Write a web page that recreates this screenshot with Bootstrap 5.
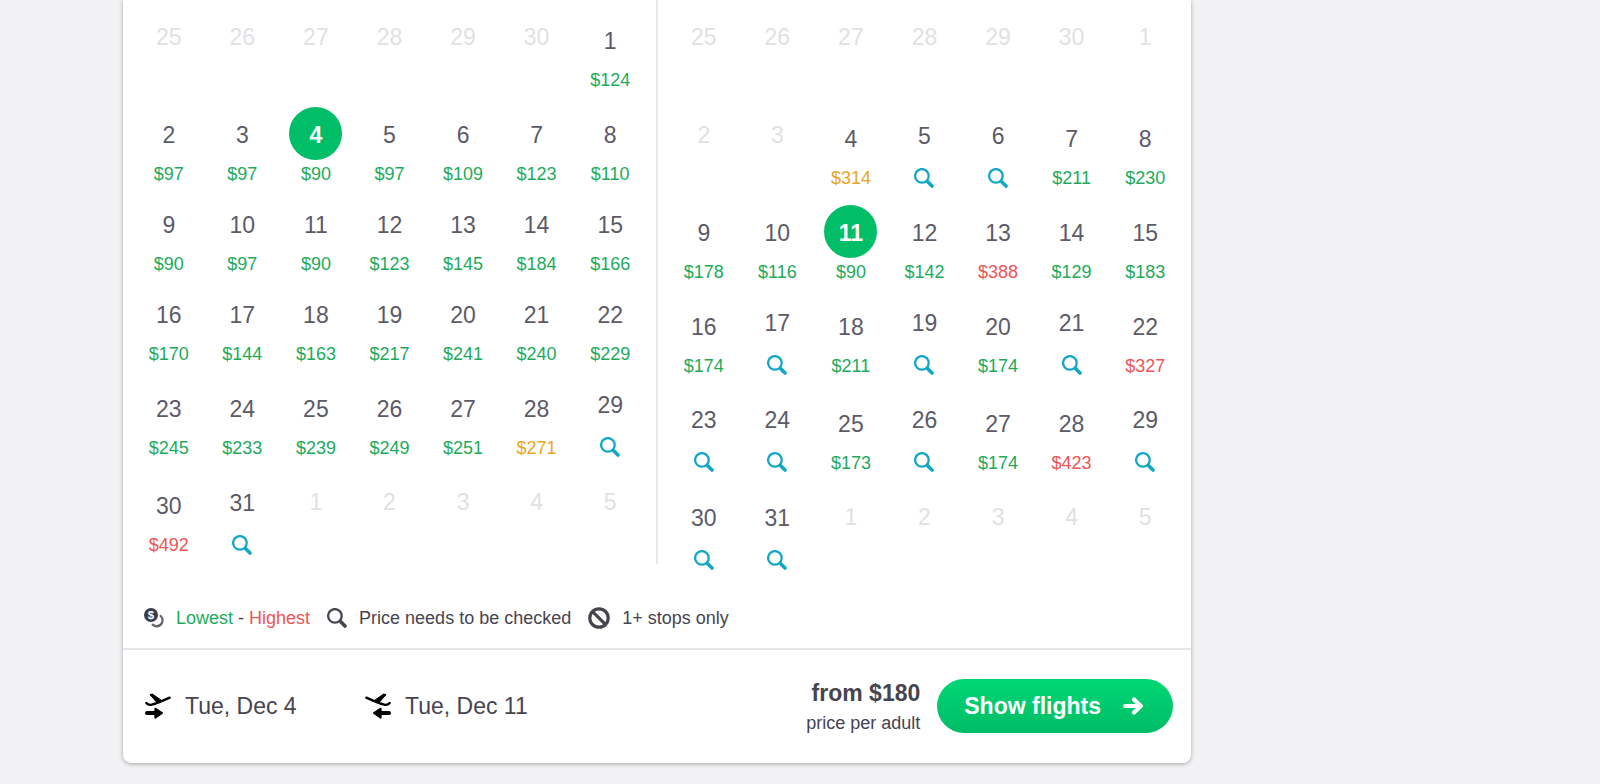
<!DOCTYPE html>
<html lang="en">
<head>
<meta charset="utf-8">
<meta name="viewport" content="width=device-width, initial-scale=1">
<title>Choose flight dates</title>
<link href="https://cdn.jsdelivr.net/npm/bootstrap@5.3.0/dist/css/bootstrap.min.css" rel="stylesheet">
<style>
  :root { --ink: #46444f; --low: #1dab5b; --mid: #e8a61f; --high: #ee5555; --check: #12a8c4; --brand: #00be67; }
  body { background: #f2f2f4; color: var(--ink); font-family: "Liberation Sans", Arial, sans-serif; font-size: 18px; line-height: 24px; }
  .picker { max-width: 1068px; margin: 0 24px 21px 123px; border-radius: 0 0 8px 8px; box-shadow: 0 1px 4px rgba(0, 0, 0, .32); }
  .month-pane { flex: 1 1 0; min-width: 0; padding: 4px 9px 0; }
  .month-rule { width: 2px; margin-bottom: 18px; background: #e9e9ea; }
  .month-grid { width: 100%; table-layout: fixed; border-collapse: collapse; }
  .month-grid td { padding: 5px 0; vertical-align: middle; text-align: center; }
  .date-btn { display: block; width: 100%; padding: 0; border: 0; background: none; color: #5c5a67; }
  .date-num { display: block; width: 53px; height: 53px; margin: 0 auto; font-size: 23px; line-height: 56px; border-radius: 50%; }
  .date-price { display: block; height: 27px; line-height: 28px; }
  .date-check { display: flex; height: 34px; align-items: center; justify-content: center; color: var(--check); }
  .date-blank { height: 35px; }
  .date-off { color: #e1e1e4; }
  .picked .date-num { background: var(--brand); color: #fff; font-weight: 700; }
  .low { color: var(--low); }
  .mid { color: var(--mid); }
  .high { color: var(--high); }
  .legend-row { padding: 24px 21px 18px; gap: 17px; border-bottom: 2px solid #e4e5e7; }
  .legend-item { display: flex; align-items: center; gap: 12px; }
  .trip-row { padding: 24px 18px 25px 22px; }
  .trip-date { display: flex; align-items: center; gap: 14px; font-size: 23px; width: 220px; color: var(--ink); text-decoration: none; }
  .trip-date svg { color: #000; }
  .fare { line-height: 30px; padding-top: 4px; margin-right: 17px; }
  .fare strong { font-size: 23px; }
  .show-btn { height: 54px; padding: 0 30px 0 27px; gap: 22px; border: 0; border-radius: 27px; color: #fff; font-size: 23px; font-weight: 700; background: linear-gradient(#00d775, #00bc66); }
  svg { flex: none; display: block; }
</style>
</head>
<body>
<svg width="0" height="0" class="position-absolute" aria-hidden="true">
  <symbol id="i-search" viewBox="0 0 20 20">
    <circle cx="7.9" cy="7.9" r="6.8" fill="none" stroke="currentColor" stroke-width="2.3"/>
    <path d="M12.5 12.5L14 14" stroke="currentColor" stroke-width="2.8"/>
    <path d="M14.2 14.2L18 18" stroke="currentColor" stroke-width="3.6" stroke-linecap="round"/>
  </symbol>
  <symbol id="i-plane" viewBox="0 0 78 78">
    <path d="M4 30Q10 37 20 35Q30 34 74 14" fill="none" stroke="currentColor" stroke-width="7" stroke-linecap="round"/>
    <path d="M15 5L22 3L49 22L36 29Z" fill="currentColor" stroke="currentColor" stroke-width="3" stroke-linejoin="round"/>
    <path d="M6 60H34" stroke="currentColor" stroke-width="12" stroke-linecap="round"/>
    <path d="M31 47L51 60L31 74Z" fill="currentColor" stroke="currentColor" stroke-width="6" stroke-linejoin="round"/>
  </symbol>
</svg>

<main class="picker bg-white">
  <section class="d-flex" aria-label="Fare calendar">
    <div class="month-pane"><table class="month-grid" id="departMonth" aria-label="Departure month"></table></div>
    <div class="month-rule"></div>
    <div class="month-pane"><table class="month-grid" id="returnMonth" aria-label="Return month"></table></div>
  </section>

  <div class="legend-row d-flex flex-wrap">
    <div class="legend-item">
      <svg width="20" height="20" viewBox="0 0 60 60" aria-hidden="true">
        <path d="M50 24A17 17 0 1 1 26 50" fill="none" stroke="#66646e" stroke-width="7" stroke-linecap="round"/>
        <circle cx="21" cy="21" r="21" fill="#3d3b47"/>
        <text x="21" y="33" text-anchor="middle" font-size="34" font-weight="700" fill="#fff">$</text>
      </svg>
      <span><span class="low">Lowest</span> - <span class="high">Highest</span></span>
    </div>
    <div class="legend-item"><svg width="20" height="20" aria-hidden="true"><use href="#i-search"/></svg><span>Price needs to be checked</span></div>
    <div class="legend-item">
      <svg width="22" height="22" viewBox="0 0 22 22" fill="none" stroke="currentColor" stroke-width="3.2" aria-hidden="true"><circle cx="11" cy="11" r="9.2"/><path d="M4.8 4.8L17.2 17.2"/></svg>
      <span>1+ stops only</span>
    </div>
  </div>

  <footer class="trip-row d-flex flex-wrap align-items-center">
    <a class="trip-date" href="#departMonth"><svg width="26" height="26" aria-hidden="true"><use href="#i-plane"/></svg>Tue, Dec 4</a>
    <a class="trip-date" href="#returnMonth"><svg width="26" height="26" viewBox="0 0 26 26" aria-hidden="true"><g transform="matrix(-1 0 0 1 26 0)"><use href="#i-plane" width="26" height="26"/></g></svg>Tue, Dec 11</a>
    <div class="fare ms-auto text-end"><strong class="d-block">from $180</strong><span class="d-block">price per adult</span></div>
    <button type="button" class="show-btn d-flex align-items-center">Show flights
      <svg width="20" height="18" viewBox="0 0 20 18" fill="none" stroke="currentColor" stroke-width="4.2" stroke-linecap="round" stroke-linejoin="round" aria-hidden="true"><path d="M2.2 9H16M11 2.4L17.8 9L11 15.6"/></svg>
    </button>
  </footer>
</main>

<script src="https://cdn.jsdelivr.net/npm/bootstrap@5.3.0/dist/js/bootstrap.bundle.min.js"></script>
<script>
  // One entry per day: "-" unavailable, "?" price to be checked, a number is the fare, "*" marks the chosen day.
  const months = {
    departMonth: [
      "25- 26- 27- 28- 29- 30- 1:124",
      "2:97 3:97 4:90* 5:97 6:109 7:123 8:110",
      "9:90 10:97 11:90 12:123 13:145 14:184 15:166",
      "16:170 17:144 18:163 19:217 20:241 21:240 22:229",
      "23:245 24:233 25:239 26:249 27:251 28:271 29?",
      "30:492 31? 1- 2- 3- 4- 5-"
    ],
    returnMonth: [
      "25- 26- 27- 28- 29- 30- 1-",
      "2- 3- 4:314 5? 6? 7:211 8:230",
      "9:178 10:116 11:90* 12:142 13:388 14:129 15:183",
      "16:174 17? 18:211 19? 20:174 21? 22:327",
      "23? 24? 25:173 26? 27:174 28:423 29?",
      "30? 31? 1- 2- 3- 4- 5-"
    ]
  };
  const tier = fare => fare > 300 && fare !== 314 ? "high" : fare > 260 ? "mid" : "low";
  function cell(entry) {
    const [, day, kind, fare, star] = entry.match(/^(\d+)([-?:])(\d*)(\*?)$/);
    const num = `<span class="date-num">${day}</span>`;
    if (kind === "-") return `<td class="date-off">${num}<div class="date-blank"></div></td>`;
    const below = kind === "?"
      ? `<span class="date-check"><svg width="20" height="20" role="img" aria-label="Check price"><use href="#i-search"/></svg></span>`
      : `<span class="date-price ${tier(+fare)}">$${fare}</span>`;
    return `<td><button type="button" class="date-btn${star ? " picked" : ""}">${num}${below}</button></td>`;
  }
  for (const [id, weeks] of Object.entries(months)) {
    document.getElementById(id).innerHTML =
      "<tbody>" + weeks.map(w => `<tr>${w.split(" ").map(cell).join("")}</tr>`).join("") + "</tbody>";
  }
</script>
</body>
</html>
